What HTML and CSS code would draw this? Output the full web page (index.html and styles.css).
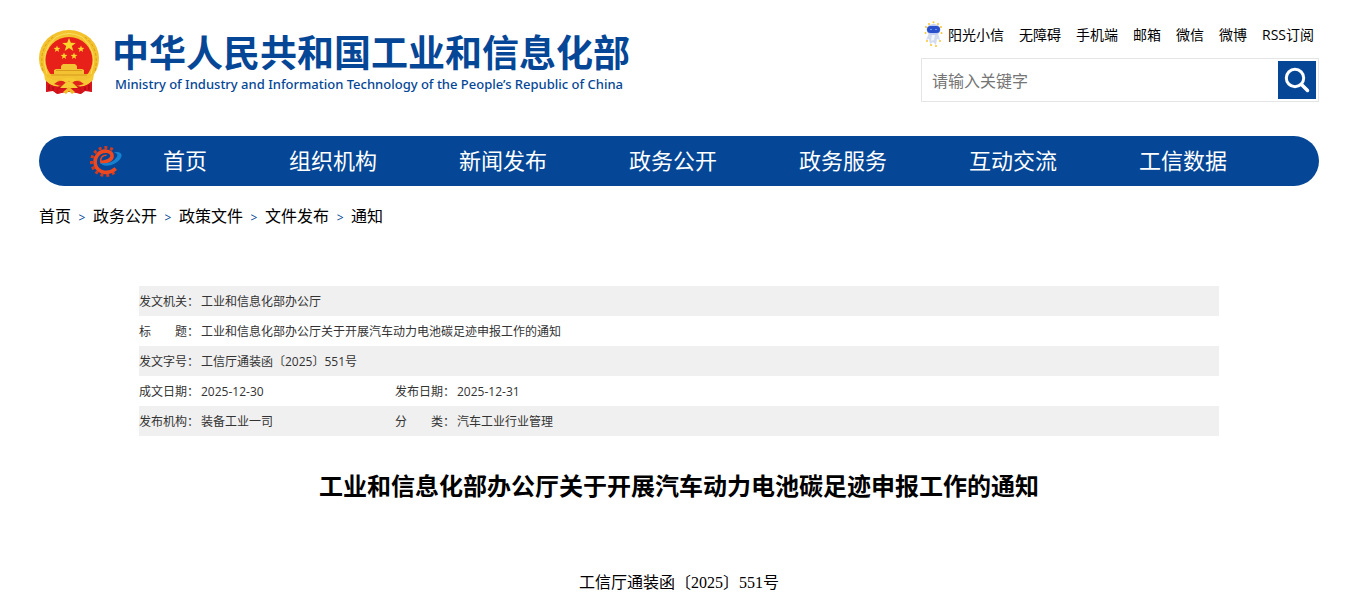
FILE: index.html
```html
<!DOCTYPE html>
<html lang="zh-CN">
<head>
<meta charset="utf-8">
<title>工业和信息化部办公厅关于开展汽车动力电池碳足迹申报工作的通知</title>
<link rel="stylesheet" href="styles.css">
</head>
<body>
<div class="w1280">
	<header class="header">
		<a class="logo" href="#">
			<svg class="emblem" viewBox="0 0 60 66" aria-hidden="true">
				<path d="M8 46 L7 63 L14 62 L18 65 L27 63 H33 L42 65 L46 62 L53 63 L52 46Z" fill="#cf1219"/>
				<ellipse cx="30" cy="29.500" rx="30" ry="28.500" fill="#f3c22c"/>
				<path d="M4 42 Q-1 20 14 8M56 42 Q61 20 46 8" stroke="#d99f1c" fill="none" stroke-dasharray="3 2"/>
				<path d="M8 45 Q0 22 17 8 Q30 1 43 8 Q60 22 52 45" stroke="#fbe065" fill="none"/>
				<ellipse cx="30" cy="31" rx="23.500" ry="23" fill="#e7211a"/>
				<path d="M30 9 l1.800 4.800 5 .1 -4 3.100 1.500 4.900 -4.300-2.900 -4.300 2.900 1.500-4.900 -4-3.100 5-.1z" fill="#fbd72c"/>
				<path id="s" d="M18 16.500 l.9 2.300 2.500.1 -2 1.600.7 2.400 -2.100-1.400 -2.100 1.400.7-2.400 -2-1.600 2.500-.1z" fill="#fbd72c"/>
				<use href="#s" x="24"/><use href="#s" x="7" y="7"/><use href="#s" x="17" y="7"/>
				<path d="M22 37 L24 35 H36 L38 37 V40 H43 L45 41 V45 H49 V51 H11 V45 H15 V41 L17 40 H22Z" fill="#f2c233"/>
				<path d="M17 41.500H43M12 46H48" stroke="#d79a1c" fill="none"/>
				<path d="M5 45 Q12 53 22 51 Q30 46 38 51 Q48 53 55 45 L54 51 Q47 59 38 57 Q30 62 22 57 Q13 59 6 51Z" fill="#f6ca32"/>
				<path d="M15 55 Q22 49 27 54 Q30 51 33 54 Q38 49 45 55 Q37 58 30 57 Q22 58 15 55Z" fill="#df241b"/>
				<path d="M25 55 Q30 50 35 55 L39 59 H21Z" fill="#f6ca32"/>
				<path d="M7 52 Q11 57 18 58 L17 64 L13 61 L7 63Z M53 52 Q49 57 42 58 L43 64 L47 61 L53 63Z" fill="#d8141c"/>
				<path d="M20 60 L18 65 L25 63 L30 60 L35 63 L42 65 L40 60Z" fill="#d8141c"/>
				<path d="M24 63 L30 58 L36 63 L33 65 L30 62 L27 65Z" fill="#f0bc28"/>
				<path d="M10 56V61M14 58V61M50 56V61M46 58V61" stroke="#970b10" fill="none"/>
			</svg>
			<span class="logo-text">
				<strong class="logo-cn">中华人民共和国工业和信息化部</strong>
				<span class="logo-en">Ministry of Industry and Information Technology of the People’s Republic of China</span>
			</span>
		</a>
		<div class="header-right">
			<div class="top-links">
				<svg class="robot" viewBox="0 0 19 26" aria-hidden="true">
					<g fill="#fbc52d">
						<circle cx="5" cy="3" r="1"/><circle cx="9.500" cy="1.200" r="1"/><circle cx="14" cy="3" r="1"/>
						<circle cx="2" cy="6" r="1"/><circle cx="17" cy="6" r="1"/><circle cx="1.500" cy="12" r="1"/>
						<circle cx="17.500" cy="12" r="1"/><circle cx="3" cy="20" r="1"/><circle cx="16" cy="20" r="1"/>
						<circle cx="7" cy="24" r="1"/><circle cx="12" cy="25" r="1"/>
					</g>
					<path d="M5 12 L2 19 L5 18 L6 23 L9 21 L12 24 L13 18 L16 19 L14 12Z" fill="#d3dcef"/>
					<path d="M8 14 L7 20 L10 19 L11 14Z" fill="#f1f5fc"/>
					<ellipse cx="9.500" cy="8.500" rx="7" ry="5.500" fill="#c3cdf0"/>
					<rect x="3" y="5" width="13" height="7" rx="3.500" fill="#2b50cc"/>
					<path d="M6 8.500h2M11 8.500h2" stroke="#6f97f5"/>
				</svg>
				<a href="#">阳光小信</a>
				<a href="#">无障碍</a>
				<a href="#">手机端</a>
				<a href="#">邮箱</a>
				<a href="#">微信</a>
				<a href="#">微博</a>
				<a href="#">RSS订阅</a>
			</div>
			<form class="search">
				<input type="text" class="search-txt" placeholder="请输入关键字" aria-label="请输入关键字">
				<button type="button" class="search-btn" aria-label="搜索">
					<svg viewBox="0 0 38 38" aria-hidden="true">
						<circle cx="17" cy="17" r="8.700" fill="none" stroke="#fff" stroke-width="3"/>
						<path d="M23.500 23.500 L29.500 29.500" stroke="#fff" stroke-width="3.500" stroke-linecap="round"/>
					</svg>
				</button>
			</form>
		</div>
	</header>

	<nav class="nav">
		<svg class="nav-logo" viewBox="0 0 32 32" aria-hidden="true">
			<!-- gear teeth, open on the right side -->
			<path d="M23 4.500 A13.500 13.500 0 1 0 25 26" fill="none" stroke="#d63a1c" stroke-width="3" stroke-dasharray="2.800 2.800"/>
			<path d="M26 23 C19 29 9 27 6.500 20 C4 12 10 5.500 17 6 C24 7 24 13 18 15.500 C15 16.800 13 17 11.500 16.500" fill="none" stroke="#f0481e" stroke-width="3.500"/>
			<path d="M24 7 C35 5 33 14 25 18 C19 21 13 21 11 17 C16 19 22 17 25 14 C29 10 28 8 24 7Z" fill="#1682cf"/>
			<path d="M11.500 17 C10.500 12 13 10 17 10" fill="none" stroke="#f0481e" stroke-width="1.500"/>
		</svg>
		<a class="home" href="#">首页</a>
		<a href="#">组织机构</a>
		<a href="#">新闻发布</a>
		<a href="#">政务公开</a>
		<a href="#">政务服务</a>
		<a href="#">互动交流</a>
		<a href="#">工信数据</a>
	</nav>

	<div class="crumb">
		<a href="#">首页</a><span>&gt;</span><a href="#">政务公开</a><span>&gt;</span><a href="#">政策文件</a><span>&gt;</span><a href="#">文件发布</a><span>&gt;</span><a href="#">通知</a>
	</div>

	<div class="article">
		<table class="info">
			<colgroup><col class="c-name"><col class="c-val"><col class="c-name"><col></colgroup>
			<tr><th scope="row">发文机关：</th><td colspan="3">工业和信息化部办公厅</td></tr>
			<tr><th scope="row">标　　题：</th><td colspan="3">工业和信息化部办公厅关于开展汽车动力电池碳足迹申报工作的通知</td></tr>
			<tr><th scope="row">发文字号：</th><td colspan="3">工信厅通装函〔2025〕551号</td></tr>
			<tr><th scope="row">成文日期：</th><td>2025-12-30</td><th scope="row">发布日期：</th><td>2025-12-31</td></tr>
			<tr><th scope="row">发布机构：</th><td>装备工业一司</td><th scope="row">分　　类：</th><td>汽车工业行业管理</td></tr>
		</table>
		<h1>工业和信息化部办公厅关于开展汽车动力电池碳足迹申报工作的通知</h1>
		<p class="doc-num">工信厅通装函〔2025〕551号</p>
	</div>
</div>
</body>
</html>
```

FILE: styles.css
```css
*{margin:0;padding:0;box-sizing:border-box;}
body{background:#fff;color:#000;font:16px/1.5 "Open Sans","Noto Sans CJK SC",sans-serif;padding-right:9px;}
a{color:#000;text-decoration:none;}
.w1280{max-width:1280px;margin:0 auto;}

/* header */
.header{display:flex;justify-content:space-between;height:136px;}
.logo{display:flex;align-items:flex-start;gap:13px;padding-top:29px;color:#054796;}
.emblem{width:60px;height:66px;flex:none;}
.logo-text{display:flex;flex-direction:column;padding-top:1px;white-space:nowrap;}
.logo-cn{font-size:37px;line-height:46px;font-weight:bold;}
.logo-en{font-family:"Noto Sans","Open Sans",sans-serif;font-size:13px;line-height:16px;font-weight:500;padding-left:3px;}

.header-right{width:398px;padding-top:20px;}
.top-links{display:flex;align-items:center;gap:15px;height:28px;padding-left:3px;font-size:14px;white-space:nowrap;}
.robot{width:19px;height:26px;margin-right:-10px;}
.search{display:flex;height:44px;margin-top:10px;padding:2px;border:1px solid #e5e5e5;}
.search-txt{flex:1;min-width:0;border:0;outline:0;padding:2px 0 0 8px;font:inherit;background:none;}
.search-txt::placeholder{color:#757575;opacity:1;}
.search-btn{width:38px;height:38px;border:0;background:#054796;cursor:pointer;}
.search-btn svg{display:block;}

/* nav */
.nav{display:flex;align-items:center;height:50px;padding-left:50px;border-radius:25px;background:#054796;}
.nav-logo{width:33px;height:33px;flex:none;}
.nav a{flex:0 1 170px;padding-bottom:2px;text-align:center;color:#fff;font-size:22px;line-height:48px;white-space:nowrap;}
.nav .home{flex-basis:126px;}

.crumb{height:60px;line-height:60px;}
.crumb span{display:inline-block;width:22px;text-align:center;font-size:12px;color:#054796;}

/* article */
.article{max-width:1080px;margin:40px auto 0;}
.info{width:100%;table-layout:fixed;border-collapse:collapse;font-size:12px;color:#333;}
.info th,.info td{height:30px;padding-top:2px;line-height:28px;text-align:left;font-weight:normal;white-space:nowrap;}
.info tr:nth-child(odd){background:#f0f0f0;}
.c-name{width:62px;}
.c-val{width:194px;}
h1{margin-top:30px;font-size:24px;line-height:40px;text-align:center;}
.doc-num{margin-top:65px;font-family:"Liberation Serif","Noto Sans CJK SC",serif;line-height:24px;text-align:center;}
```
